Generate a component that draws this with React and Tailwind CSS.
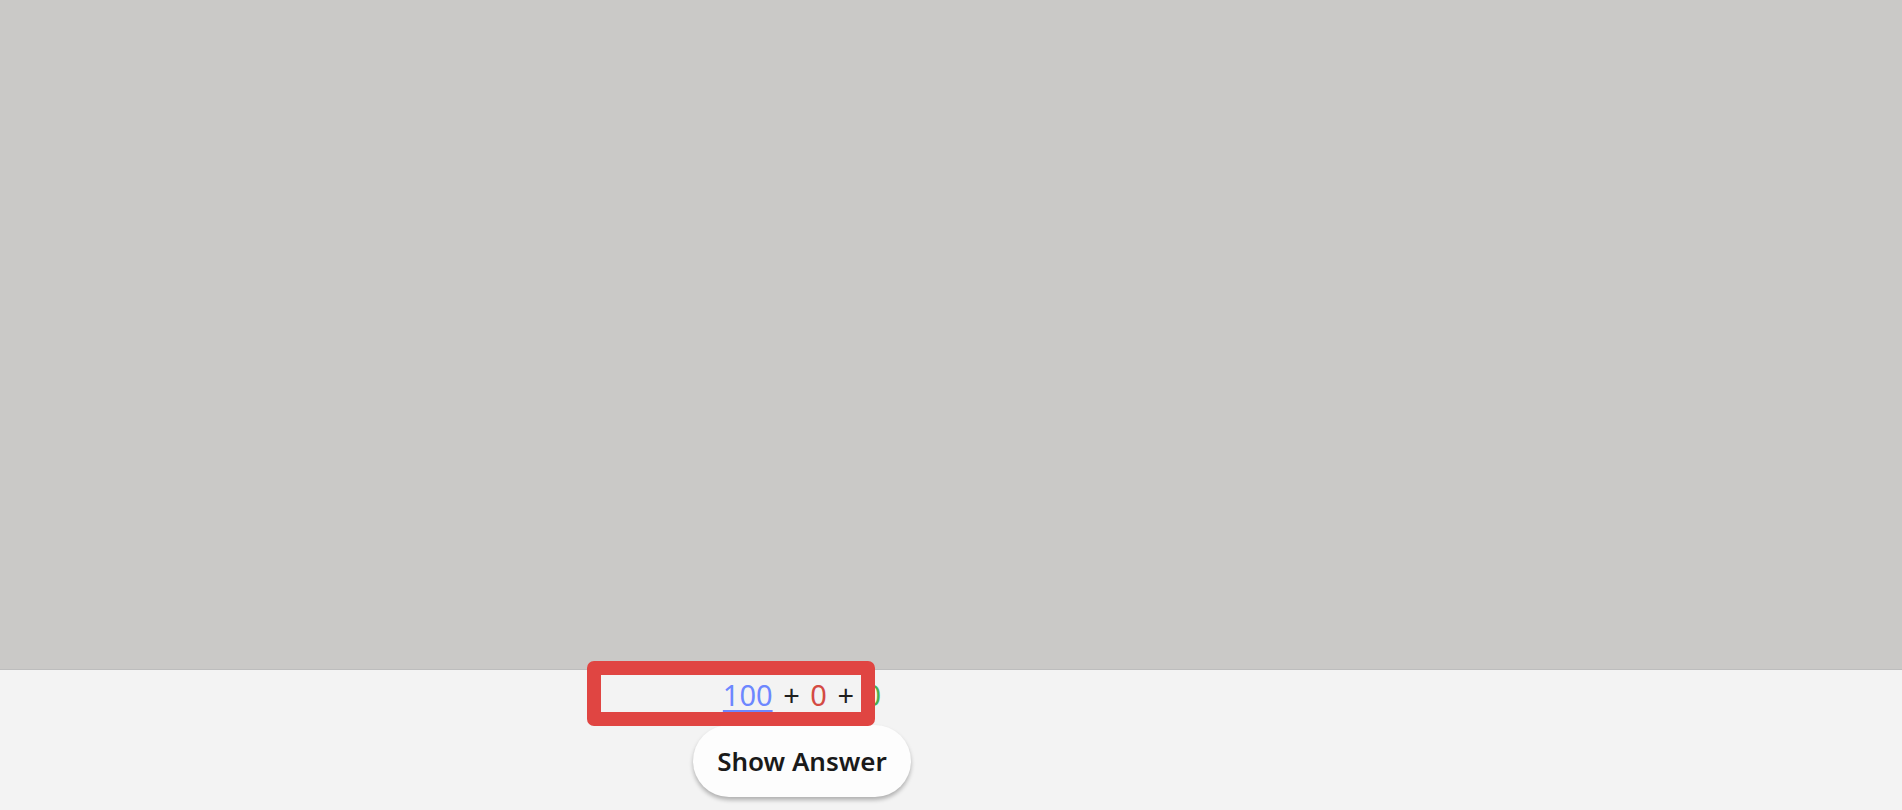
import React from "react";

const App = () => {
    return (
        <div
            className="w-[1902px] h-[810px] flex flex-col overflow-hidden"
            style={{ fontFamily: '"Noto Sans", "Open Sans", sans-serif' }}
        >
            {/* card area */}
            <div className="h-[669px] bg-[#cac9c7]" />

            {/* bottom bar */}
            <div className="relative flex-1 bg-[#f3f3f3] border-t border-[#bdbdbd]">
                <div className="w-[1604px] flex flex-col items-center pt-[6px]">
                    <div className="h-[36px] leading-[37px] text-[29px] text-[#1f1f1f] whitespace-pre [word-spacing:3px]">
                        <span className="text-[#6d87ff] underline underline-offset-[4px] decoration-[1.5px]">
                            100
                        </span>
                        {" + "}
                        <span className="text-[#d44a43]">0</span>
                        {" + "}
                        <span className="text-[#4caf50]">0</span>
                    </div>
                    <button className="mt-[13px] w-[218px] h-[72px] rounded-full bg-[#fdfdfd] text-[26px] font-semibold text-[#1a1a1a] shadow-[0_3px_4px_rgba(0,0,0,0.28)]">
                        Show Answer
                    </button>
                </div>

                {/* highlight box */}
                <div className="absolute left-[587px] top-[-9px] w-[288px] h-[65px] border-[14px] border-[#e04542] rounded-[7px]" />
            </div>
        </div>
    );
};

export default App;
